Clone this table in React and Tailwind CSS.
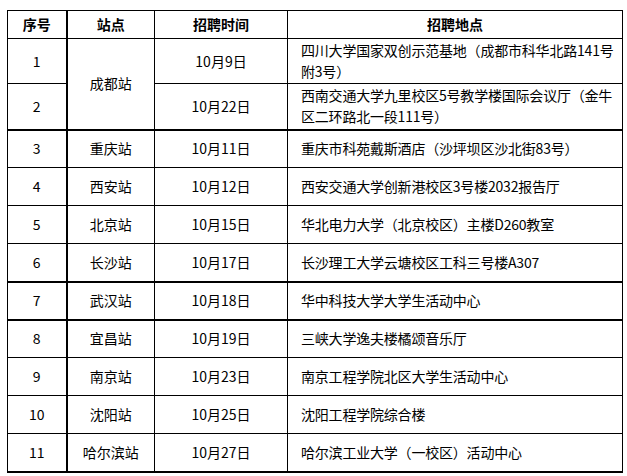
const ROWS = [
  { no: "1", city: "成都站", span: 2, date: "10月9日", place: ["四川大学国家双创示范基地（成都市科华北路141号", "附3号）"], h: "h-[45px]" },
  { no: "2", city: null, date: "10月22日", place: ["西南交通大学九里校区5号教学楼国际会议厅（金牛", "区二环路北一段111号）"], h: "h-[46px]", thick: true },
  { no: "3", city: "重庆站", date: "10月11日", place: ["重庆市科苑戴斯酒店（沙坪坝区沙北街83号）"] },
  { no: "4", city: "西安站", date: "10月12日", place: ["西安交通大学创新港校区3号楼2032报告厅"] },
  { no: "5", city: "北京站", date: "10月15日", place: ["华北电力大学（北京校区）主楼D260教室"] },
  { no: "6", city: "长沙站", date: "10月17日", place: ["长沙理工大学云塘校区工科三号楼A307"], thick: true },
  { no: "7", city: "武汉站", date: "10月18日", place: ["华中科技大学大学生活动中心"], thick: true },
  { no: "8", city: "宜昌站", date: "10月19日", place: ["三峡大学逸夫楼橘颂音乐厅"] },
  { no: "9", city: "南京站", date: "10月23日", place: ["南京工程学院北区大学生活动中心"] },
  { no: "10", city: "沈阳站", date: "10月25日", place: ["沈阳工程学院综合楼"] },
  { no: "11", city: "哈尔滨站", date: "10月27日", place: ["哈尔滨工业大学（一校区）活动中心"], thick: true },
];

export default function App() {
  return (
    <div className="w-[627px] h-[476px] overflow-hidden bg-white text-black font-['Noto_Sans_CJK_SC',sans-serif] text-[14px] leading-[21px]">
      <div className="pt-[10px] pl-[7px]">
        <table className="w-[615px] table-fixed border-collapse">
          <colgroup>
            <col className="w-[59px]" />
            <col className="w-[88px]" />
            <col className="w-[133px]" />
            <col className="w-[335px]" />
          </colgroup>
          <thead>
            <tr className="h-[28px]">
              <th className="border border-black border-r-2 font-bold text-center">序号</th>
              <th className="border border-black font-bold text-center">站点</th>
              <th className="border border-black font-bold text-center">招聘时间</th>
              <th className="border border-black font-bold text-center">招聘地点</th>
            </tr>
          </thead>
          <tbody>
            {ROWS.map((r) => {
              const b = r.thick ? "border border-black border-b-2" : "border border-black";
              return (
                <tr key={r.no} className={r.h || "h-[38px]"}>
                  <td className={`${b} border-r-2 text-center`}>{r.no}</td>
                  {r.city && (
                    <td
                      rowSpan={r.span || 1}
                      className={`${r.span ? "border border-black border-b-2" : b} text-center`}
                    >
                      {r.city}
                    </td>
                  )}
                  <td className={`${b} text-center`}>{r.date}</td>
                  <td className={`${b} pl-[13px] pr-0 text-left`}>
                    {r.place.map((line) => (
                      <div key={line} className="whitespace-nowrap tracking-[-0.2px]">
                        {line}
                      </div>
                    ))}
                  </td>
                </tr>
              );
            })}
          </tbody>
        </table>
        <p className="mt-[1px] whitespace-nowrap">注：具体宣讲时间及地点以学校就业网通知为准。</p>
      </div>
    </div>
  );
}
